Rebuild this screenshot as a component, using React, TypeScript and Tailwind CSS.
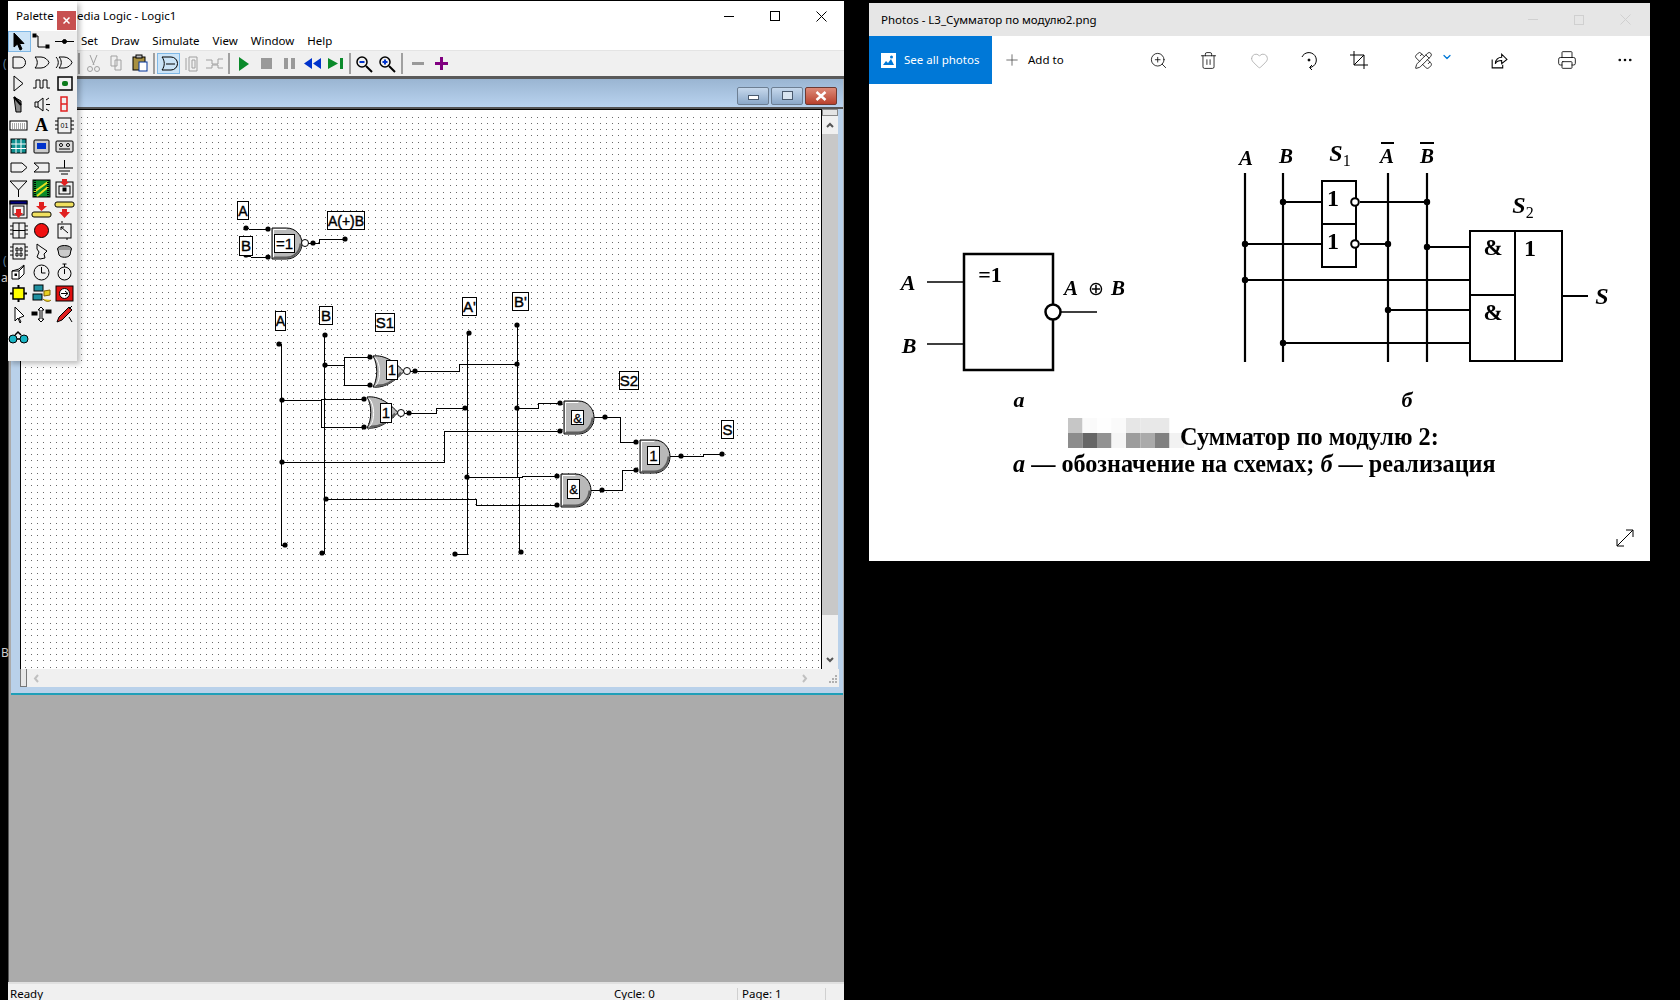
import React from 'react';
import { ZoomIn, Trash2, Heart, PencilRuler, Printer, MoreHorizontal, Plus, ChevronDown } from 'lucide-react';

const ICON = { width: 23, height: 21, viewBox: '0 0 23 21', fill: 'none', stroke: '#000', strokeWidth: 1 };

const Ic: React.FC<{ children: React.ReactNode; className?: string }> = ({ children, className }) => (
  <svg {...ICON} className={className ?? 'block shrink-0'}>{children}</svg>
);

// palette tools, 3 per row, same order as the window
const PALETTE: React.ReactNode[] = [
  <path d="M7 2v14l3.5-3 2.5 6 2-1-2.5-5.5H17z" fill="#000" />,
  <><path d="M5 5h3v11h9" /><rect x="3" y="3" width="3" height="3" fill="#000" /><rect x="16" y="14" width="3" height="3" fill="#000" /></>,
  <><path d="M2 10.5h19" /><circle cx="11.5" cy="10.5" r="2" fill="#000" /></>,

  <path d="M6 5h7a5.5 5.5 0 0 1 0 11H6z" />,
  <path d="M5 5h6c4 0 7 3 8 5.500-1 2.500-4 5.500-8 5.500H5c3-3 3-8 0-11z" />,
  <><path d="M3 5c3 3 3 8 0 11M6 5h5c4 0 7 3 8 5.500-1 2.500-4 5.500-8 5.500H6c3-3 3-8 0-11z" /></>,

  <path d="M7 3l9 7.500-9 7.500z" />,
  <path d="M3 15h3V7h4v8h3V7h4v8h3" />,
  <><rect x="5" y="4" width="14" height="13" strokeWidth="1.500" /><rect x="9" y="8" width="6" height="5" rx="2" fill="#0a7a1a" stroke="none" /></>,

  <><path d="M7 3l7 4v11H9z" fill="#888" /><path d="M7 3l7 8" strokeWidth="2" /></>,
  <path d="M5 8h3v5H5zM8 8l5-4v13l-5-4M16 6l3-2M16 10.500h4M16 15l3 2" />,
  <path d="M8 3h6v7H8zM8 10h6v7H8z" stroke="#e02020" strokeWidth="1.500" />,

  <><rect x="3" y="6" width="17" height="9" fill="#fff" /><path d="M5 9h13M5 11h13M5 13h13" stroke="#555" strokeDasharray="1 1" /></>,
  <text x="11.500" y="16" textAnchor="middle" fill="#000" stroke="none" fontSize="18" fontWeight="700" className="font-['Liberation_Serif',serif]">A</text>,
  <><rect x="5" y="3" width="13" height="15" /><path d="M2 6h3M2 10h3M2 14h3M18 6h3M18 10h3M18 14h3" /><text x="11.500" y="13" textAnchor="middle" fontSize="7" fill="#000" stroke="none" className="font-['Liberation_Sans',sans-serif]">01</text></>,

  <><rect x="4" y="3" width="15" height="14" fill="#0f8f8f" /><path d="M4 8h15M4 12.500h15M9 3v14M14 3v14" stroke="#fff" /></>,
  <><rect x="4" y="4" width="15" height="13" rx="1" fill="#ccc" /><rect x="7" y="7" width="9" height="6" fill="#0033cc" stroke="none" /></>,
  <><rect x="3" y="5" width="17" height="11" rx="1" fill="#ddd" /><circle cx="8" cy="9" r="1.500" fill="#fff" /><circle cx="15" cy="9" r="1.500" fill="#fff" /><path d="M6 13h11" /></>,

  <path d="M4 6h11l5 4.500-5 4.500H4z" />,
  <path d="M4 6h15v9H4l5-4.500z" />,
  <path d="M11.500 3v8M3 11h17M6 14h11M8 17h7" />,

  <><path d="M3 3l8.500 9L20 3zM11.500 12v7" fill="none" /></>,
  <><rect x="3" y="2" width="17" height="17" fill="#0a8a2a" /><path d="M4 14L18 4M7 18l11-9" stroke="#e8e020" strokeWidth="2" /><path d="M5 2v17M18 2v17" stroke="#000" strokeDasharray="1 1" strokeWidth="2" /></>,
  <><rect x="3" y="4" width="17" height="15" /><rect x="6" y="8" width="11" height="8" /><rect x="10" y="10" width="3" height="3" fill="#000" /><path d="M9 1h5v3h2l-4.500 4L7 4h2z" fill="#e02020" stroke="none" /></>,

  <><rect x="3" y="2" width="17" height="17" /><rect x="3" y="2" width="17" height="3" fill="#000080" /><rect x="6" y="7" width="11" height="9" /><path d="M9 10h5v4h2l-4.500 5L7 14h2z" fill="#e02020" stroke="none" /></>,
  <><rect x="2" y="13" width="19" height="5" rx="2" fill="#f0e060" /><path d="M9 3h5v4h3l-5.500 5L6 7h3z" fill="#e02020" stroke="none" /></>,
  <><rect x="2" y="3" width="19" height="5" rx="2" fill="#f0e060" /><path d="M9 10h5v3h3l-5.500 6L6 13h3z" fill="#e02020" stroke="none" /></>,

  <><rect x="6" y="3" width="12" height="15" /><path d="M3 6h3M3 10h3M3 14h3M18 6h3M18 10h3M18 14h3M12 3v15M6 10.500h12" /></>,
  <circle cx="11.500" cy="10.500" r="7" fill="#f01010" />,
  <><rect x="5" y="4" width="13" height="14" /><path d="M9 3v-2M14 18v2M8 7l7 6M8 7h3M8 7v3" /></>,

  <><rect x="6" y="3" width="12" height="15" /><path d="M3 6h3M3 10h3M3 14h3M18 6h3M18 10h3M18 14h3M9 7h2v3H9zM13 7h2v3h-2zM9 12h2v3H9zM13 12h2v3h-2z" /></>,
  <path d="M7 3l4 3 6 4-3 3 1 4-5 1-3-2 2-5-2-3z" />,
  <><ellipse cx="11.500" cy="8" rx="7" ry="3.500" fill="#999" /><path d="M5 9l1 5c2 3 9 3 11 0l1-5" fill="#ccc" /></>,

  <><path d="M5 9l7-2 5-4v9l-5 5H5z" fill="#fff" /><path d="M5 9h7v8M12 9l5-5" /><rect x="8" y="12" width="1.500" height="1.500" fill="#000" /></>,
  <><circle cx="11.500" cy="10.500" r="7.500" /><path d="M11.500 5v6h4" /></>,
  <><circle cx="11.500" cy="11.500" r="6.500" /><path d="M11.500 7v5M9.500 2h4M11.500 2v3" /></>,

  <><rect x="6" y="5" width="11" height="11" fill="#ffff00" strokeWidth="1.500" /><path d="M11.500 2v3M11.500 16v3M3 10.500h3M17 10.500h3" strokeWidth="2" /></>,
  <><rect x="4" y="2" width="9" height="6" fill="#2090a0" /><rect x="3" y="11" width="9" height="6" fill="#2090a0" /><path d="M14 8l6-1v5l-6 1zM13 16c3 3 6 3 8 1" stroke="#806000" fill="#e8d020" /></>,
  <><rect x="3" y="3" width="17" height="15" fill="#e01010" /><circle cx="11.500" cy="10.500" r="5" fill="#fff" /><path d="M8 10.500h7M12 8l3 2.500-3 2.500" /></>,

  <path d="M8 3v14l3-3 2 5 1-1-2-4 5-2z" fill="#fff" />,
  <><path d="M11 3L8 6h2v9H8l3 3 3-3h-2V6h2z" fill="#fff" /><rect x="2" y="8" width="5" height="3" fill="#000" /><rect x="16" y="6" width="5" height="3" fill="#000" /></>,
  <><path d="M4 18l2-5L16 3l3 3L9 16z" fill="#e02020" /><path d="M19 2l-3 3M16 13l3 5" /></>,

  <><circle cx="6" cy="13" r="4" fill="#19b5c5" /><circle cx="17" cy="13" r="4" fill="#19b5c5" /><path d="M10 13h3M8 9l3-3 3 3" strokeWidth="1.500" /></>,
];

const TOOLBAR_LEFT = (
  <>
    <path d="M8 2l4 10M15 2l-4 10" stroke="#a0a0a0" /><circle cx="8" cy="16" r="2.500" stroke="#a0a0a0" /><circle cx="15" cy="16" r="2.500" stroke="#a0a0a0" />
  </>
);

const Sep = () => <div className="w-[6px] h-[21px] flex justify-center"><div className="w-[2px] h-full bg-[#a0a0a0]" /></div>;

const Tb: React.FC<{ children: React.ReactNode; on?: boolean }> = ({ children, on }) => (
  <div className={on ? 'w-[23px] h-[21px] bg-[#cce4f7] outline outline-1 -outline-offset-1 outline-[#7fb8e6]' : 'w-[23px] h-[21px]'}>
    <Ic>{children}</Ic>
  </div>
);

// circuit helpers, coordinates are the screen pixels
const Dot: React.FC<{ p: [number, number] }> = ({ p }) => <circle cx={p[0]} cy={p[1]} r={2.600} fill="#000" />;

const Wire: React.FC<{ d: string }> = ({ d }) => <path d={d} fill="none" stroke="#000" strokeWidth={1} shapeRendering="crispEdges" />;

const Label: React.FC<{ x: number; y: number; w: number; h: number; t: string; size?: number }> = ({ x, y, w, h, t, size = 15 }) => (
  <g>
    <rect x={x + 0.500} y={y + 0.500} width={w} height={h} fill="#fff" stroke="#000" />
    <text x={x + w / 2 + 0.500} y={y + h / 2 + 5.500} textAnchor="middle" fontSize={size} fill="#000" stroke="#000" strokeWidth={0.400} className="font-['Liberation_Sans',sans-serif]">{t}</text>
  </g>
);

const InBox: React.FC<{ x: number; y: number; w: number; h: number; t: string; size?: number }> = ({ x, y, w, h, t, size = 15 }) => (
  <g>
    <rect x={x + 0.500} y={y + 0.500} width={w} height={h} fill="#fff" stroke="#000" />
    <text x={x + w / 2 + 0.500} y={y + h / 2 + 5.500} textAnchor="middle" fontSize={size} fill="#000" stroke="#000" strokeWidth={0.300} className="font-['Liberation_Sans',sans-serif]">{t}</text>
  </g>
);

const AndGate: React.FC<{ x: number; y: number; w?: number; h?: number }> = ({ x, y, w = 30, h = 32 }) => {
  const m = x + w * 0.48;
  return (
    <g>
      <path d={`M${x} ${y}H${m}C${x + w * 0.8} ${y} ${x + w} ${y + h * 0.25} ${x + w} ${y + h / 2}C${x + w} ${y + h * 0.75} ${x + w * 0.8} ${y + h} ${m} ${y + h}H${x}Z`} fill="#b9b9b9" stroke="#000" />
      <path d={`M${x + 1.500} ${y + h - 1.500}H${m}C${x + w * 0.75} ${y + h - 1.500} ${x + w - 2} ${y + h * 0.75} ${x + w - 1.500} ${y + h / 2}`} fill="none" stroke="#5e5e5e" strokeWidth={2} />
      <path d={`M${x + 1.500} ${y + h - 2}V${y + 1.500}H${m}`} fill="none" stroke="#fff" />
    </g>
  );
};

const OrGate: React.FC<{ x: number; y: number; w?: number; h?: number }> = ({ x, y, w = 31, h = 31 }) => (
  <g>
    <path d={`M${x} ${y}C${x + 8} ${y - 1} ${x + w * 0.6} ${y + 2} ${x + w} ${y + h / 2}C${x + w * 0.6} ${y + h - 2} ${x + 8} ${y + h + 1} ${x} ${y + h}C${x + 5} ${y + h * 0.75} ${x + 5} ${y + h * 0.25} ${x} ${y}Z`} fill="#b9b9b9" stroke="#000" />
    <path d={`M${x + 3} ${y + h - 1.500}C${x + 12} ${y + h - 1} ${x + w * 0.6} ${y + h - 4} ${x + w - 3} ${y + h / 2 + 1}`} fill="none" stroke="#5e5e5e" strokeWidth={2} />
    <path d={`M${x + 2} ${y + 1.500}C${x + 8} ${y + 7} ${x + 8} ${y + h - 7} ${x + 3} ${y + h - 2}`} fill="none" stroke="#fff" />
  </g>
);

const Bubble: React.FC<{ x: number; y: number }> = ({ x, y }) => <circle cx={x} cy={y} r={3.500} fill="#fff" stroke="#000" />;

const DOTS: [number, number][] = [
  [246, 228], [246, 255], [268, 229], [268, 257], [313, 243], [345, 239],
  [279, 344], [285, 545], [325, 335], [322, 553], [469, 333], [455, 554], [517, 325], [521, 552],
  [325, 365], [370, 357], [370, 385], [415, 371], [517, 364],
  [282, 400], [364, 399], [364, 427], [409, 413], [465, 408],
  [517, 408], [560, 403], [605, 417], [636, 442],
  [282, 462], [560, 431], [467, 477], [557, 476], [602, 490], [636, 470],
  [326, 499], [557, 505], [681, 456], [722, 454],
];

const WIRES = [
  'M246 228L251 229.500H268M246 255L251 257H268',
  'M308 243H319V239H345',
  'M279 344H281.500V545H285',
  'M324 335V553H322',
  'M469 333H467V554H455',
  'M517 325V477H519V552H521',
  'M325 365H344M344 357V385M344 357H370M344 385H370',
  'M410 371H459V364H517',
  'M282 400H321M321 399V427M321 399H364M321 427H364',
  'M404 413H436V408H465',
  'M517 408H538V403H560',
  'M594 417H620V442H636',
  'M282 462H444V431H560',
  'M467 477H522V476H557',
  'M591 490H622V470H636',
  'M326 499H476V505H557',
  'M670 456H703V454H722',
];

const gridDots = (() => {
  let d = '';
  for (let y = 116.500; y < 669; y += 6.250) {
    for (let x = 24.500; x < 821; x += 6.250) {
      d += `M${Math.round(x)} ${Math.round(y)}h1v1h-1z`;
    }
  }
  return d;
})();

const Circuit = () => (
  <svg viewBox="21 110 800 559" className="block w-[800px] h-[559px] bg-white">
    <path d={gridDots} fill="#6a6a6a" />
    {WIRES.map((d) => <Wire key={d} d={d} />)}

    <AndGate x={272} y={228} w={30} h={31} />
    <InBox x={274} y={234} w={20} h={18} t="=1" />
    <Bubble x={305} y={243} />

    <OrGate x={373} y={356} />
    <InBox x={386} y={360} w={11} h={19} t="1" />
    <Bubble x={407} y={371} />

    <OrGate x={367} y={397} />
    <InBox x={380} y={403} w={11} h={19} t="1" />
    <Bubble x={401} y={413} />

    <AndGate x={564} y={401} w={30} h={33} />
    <InBox x={571} y={410} w={12} h={14} t="&" size={13} />
    <AndGate x={561} y={474} w={30} h={33} />
    <InBox x={567} y={479} w={12} h={19} t="&" size={13} />
    <AndGate x={640} y={440} w={30} h={33} />
    <InBox x={647} y={446} w={12} h={18} t="1" />

    {DOTS.map((p) => <Dot key={p.join()} p={p} />)}

    <Label x={237} y={201} w={11} h={18} t="A" size={14} />
    <Label x={239} y={236} w={13} h={19} t="B" />
    <Label x={327} y={211} w={37} h={18} t="A(+)B" size={14} />
    <Label x={275} y={311} w={10} h={19} t="A" size={14} />
    <Label x={319} y={306} w={13} h={18} t="B" />
    <Label x={375} y={313} w={19} h={18} t="S1" />
    <Label x={462} y={297} w={14} h={18} t="A'" />
    <Label x={512} y={292} w={16} h={18} t="B'" />
    <Label x={619} y={371} w={19} h={18} t="S2" />
    <Label x={721} y={420} w={12} h={18} t="S" />
  </svg>
);

const SERIF = "font-['Liberation_Serif',serif]";

const Scan = () => {
  const top = ['#c6c6c6', '#fafafa', '#fefefe', '#fafafa', '#e6e6e6', '#e8e8e8', '#e8e8e8', '#ffffff'];
  const bottom = ['#8c8c8c', '#666666', '#929292', '#f5f5f5', '#9c9c9c', '#aaaaaa', '#808080', '#f2f2f2'];
  const Bi: React.FC<{ x: number; y: number; t: string; size?: number }> = ({ x, y, t, size = 21 }) => (
    <text x={x} y={y} textAnchor="middle" fontSize={size} fontWeight={700} fontStyle="italic" fill="#000">{t}</text>
  );
  const It: React.FC<{ x: number; y: number; t: string; sub: string }> = ({ x, y, t, sub }) => (
    <text x={x} y={y} textAnchor="middle" fontSize={24} fontWeight={700} fontStyle="italic" fill="#000">{t}<tspan fontSize={16} dy={5} fontStyle="normal" fontWeight={400}>{sub}</tspan></text>
  );
  return (
    <svg viewBox="869 84 781 477" className={`block w-[781px] h-[477px] blur-[0.4px] ${SERIF}`}>
      {/* pixelated patches over the figure number */}
      {top.map((c, i) => <rect key={`t${i}`} x={1068 + i * 14.500} y={418} width={14.500} height={15} fill={c} />)}
      {bottom.map((c, i) => <rect key={`b${i}`} x={1068 + i * 14.500} y={433} width={14.500} height={15} fill={c} />)}

      <g fill="none" stroke="#000" strokeWidth={2}>
        {/* a */}
        <rect x={964} y={254} width={89} height={116} strokeWidth={2.500} />
        <path d="M927 282H963M927 344H963M1061 312H1097" strokeWidth={1.600} />
        <circle cx={1053} cy={312} r={7.500} fill="#fff" strokeWidth={2.500} />

        {/* b */}
        <path d="M1245 173V362M1283 173V362M1388 173V362M1427 173V362" strokeWidth={2.200} />
        <rect x={1322} y={181} width={34} height={86} fill="#fff" />
        <path d="M1322 224H1356" />
        <path d="M1283 202H1322M1360 202H1427M1245 244H1322M1360 244H1388" />
        <path d="M1245 280H1470M1388 310H1470M1283 343H1470M1427 247H1470M1562 296H1588" />
        <rect x={1470} y={231} width={92} height={130} fill="#fff" />
        <path d="M1515 231V361M1470 295H1515" />
        <circle cx={1355} cy={202} r={3.800} fill="#fff" />
        <circle cx={1355} cy={244} r={3.800} fill="#fff" />
        <path d="M1381 143H1394M1420 143H1434" strokeWidth={1.800} />
      </g>
      <g fill="#000">
        {[[1283, 202], [1427, 202], [1245, 244], [1388, 244], [1245, 280], [1427, 247], [1388, 310], [1283, 343]].map((p) => (
          <circle key={p.join()} cx={p[0]} cy={p[1]} r={3.200} />
        ))}
      </g>

      <Bi x={908} y={290} t="A" size={22} />
      <Bi x={909} y={353} t="B" size={22} />
      <text x={990} y={282} textAnchor="middle" fontSize={22} fontWeight={700} fill="#000">=1</text>
      <Bi x={1071} y={295} t="A" />
      <text x={1096} y={295} textAnchor="middle" fontSize={19} fill="#000">⊕</text>
      <Bi x={1118} y={295} t="B" />
      <Bi x={1019} y={407} t="а" size={22} />

      <Bi x={1246} y={165} t="A" />
      <Bi x={1286} y={163} t="B" />
      <It x={1340} y={161} t="S" sub="1" />
      <Bi x={1387} y={163} t="A" />
      <Bi x={1427} y={163} t="B" />
      <It x={1523} y={213} t="S" sub="2" />
      <text x={1333} y={206} textAnchor="middle" fontSize={24} fontWeight={700} fill="#000">1</text>
      <text x={1333} y={249} textAnchor="middle" fontSize={24} fontWeight={700} fill="#000">1</text>
      <text x={1493} y={255} textAnchor="middle" fontSize={23} fontWeight={700} fill="#000">&amp;</text>
      <text x={1493} y={320} textAnchor="middle" fontSize={23} fontWeight={700} fill="#000">&amp;</text>
      <text x={1530} y={256} textAnchor="middle" fontSize={24} fontWeight={700} fill="#000">1</text>
      <text x={1602} y={304} textAnchor="middle" fontSize={24} fontStyle="italic" fontWeight={700} fill="#000">S</text>
      <Bi x={1407} y={407} t="б" size={22} />

      <text x={1180} y={445} fontSize={24.300} fontWeight={700} fill="#000">Сумматор по модулю 2:</text>
      <text x={1013} y={472} fontSize={24.200} fontWeight={700} fill="#000"><tspan fontStyle="italic">а</tspan> — обозначение на схемах; <tspan fontStyle="italic">б</tspan> — реализация</text>
    </svg>
  );
};

const LogicWindow = () => (
  <div className="w-[836px] mt-px h-[999px] flex flex-col bg-white font-['Noto_Sans',sans-serif] text-[11.5px] text-black">
    <div className="h-[30px] flex items-center pl-[69px] relative">
      <span className="leading-none">edia Logic - Logic1</span>
      <div className="ml-auto flex items-center h-full text-black">
        <div className="w-[46px] flex justify-center"><div className="w-[10px] h-px bg-black" /></div>
        <div className="w-[46px] flex justify-center"><div className="w-[10px] h-[10px] border border-black" /></div>
        <div className="w-[46px] flex justify-center">
          <svg width="11" height="11" viewBox="0 0 11 11" stroke="#000" fill="none"><path d="M.5.5l10 10M10.500.5l-10 10" /></svg>
        </div>
      </div>
    </div>
    <div className="h-[19px] flex items-center pl-[73px] gap-[13px] leading-none">
      <span>Set</span><span>Draw</span><span>Simulate</span><span>View</span><span>Window</span><span>Help</span>
    </div>
    <div className="h-[29px] shrink-0 bg-[#f0f0f0] border-t border-[#e4e4e4] border-b-[3px] border-b-[#5a5a5a] flex items-center pl-[68px]">
      <Sep />
      <Tb>{TOOLBAR_LEFT}</Tb>
      <Tb><path d="M6 3h6v10H6zM10 7h6v10h-6z" stroke="#a0a0a0" fill="#f0f0f0" /></Tb>
      <Tb><rect x="5" y="4" width="12" height="13" fill="#a89040" /><rect x="8" y="2" width="6" height="3" fill="#bbb" /><rect x="11" y="9" width="8" height="9" fill="#fff" stroke="#003399" /></Tb>
      <Sep />
      <Tb on><path d="M5 4h9a6 6 0 0 1 0 13H5c3-4 3-9 0-13zM9 11h9" /></Tb>
      <Tb><path d="M6 5v12M9 4h8v14H9zM12 7h3v8h-3z" stroke="#a0a0a0" /></Tb>
      <Tb><path d="M3 7h6v4h6V6h5M3 15h6v-3h6v3h5" stroke="#a0a0a0" /></Tb>
      <Sep />
      <Tb><path d="M7 4l10 7-10 7z" fill="#0a8a2a" stroke="none" /></Tb>
      <Tb><rect x="6" y="5" width="11" height="11" fill="#999" stroke="none" /></Tb>
      <Tb><path d="M6 5h4v11H6zM13 5h4v11h-4z" fill="#999" stroke="none" /></Tb>
      <Tb><path d="M11 5v11L3 10.500zM20 5v11l-8-5.500z" fill="#0033cc" stroke="none" /></Tb>
      <Tb><path d="M4 5l10 5.500L4 16zM16 5h3v11h-3z" fill="#0a8a2a" stroke="none" /></Tb>
      <Sep />
      <Tb><circle cx="9" cy="9" r="5" strokeWidth="1.500" /><path d="M6.500 9h5" stroke="#0033cc" strokeWidth="2" /><path d="M13 13l6 6" strokeWidth="2" /></Tb>
      <Tb><circle cx="9" cy="9" r="5" strokeWidth="1.500" /><path d="M6.500 9h5M9 6.500v5" stroke="#0033cc" strokeWidth="2" /><path d="M13 13l6 6" strokeWidth="2" /></Tb>
      <Sep />
      <div className="w-[2px]" />
      <Tb><rect x="5" y="9" width="12" height="3" fill="#999" stroke="none" /></Tb>
      <Tb><path d="M10 4h3v5h5v3h-5v5h-3v-5H5V9h5z" fill="#800080" stroke="none" /></Tb>
    </div>

    {/* workspace with the child window */}
    <div className="flex-1 min-h-0 bg-[#ababab] border-l border-[#555] pl-[2px] flex flex-col">
      <div className="w-[832px] h-[616px] bg-[#b9d1ea] border-b-2 border-b-[#1f9fb8] flex flex-col">
        <div className="h-[30px] shrink-0 bg-linear-to-b from-[#9ab5d2] to-[#b9d3ef] border-b-2 border-b-[#555] flex items-center justify-end gap-[2px] pr-[6px] pt-[5px]">
          <div className="w-[32px] h-[18px] rounded-[2px] border border-[#6d7f93] bg-linear-to-b from-[#c6d8ec] to-[#8ba8c8] flex items-center justify-center"><div className="w-[11px] h-[5px] bg-white border border-[#4a5a6e] mt-[3px]" /></div>
          <div className="w-[32px] h-[18px] rounded-[2px] border border-[#6d7f93] bg-linear-to-b from-[#c6d8ec] to-[#8ba8c8] flex items-center justify-center"><div className="w-[11px] h-[9px] bg-[#d8e4f0] border border-[#4a5a6e]" /></div>
          <div className="w-[32px] h-[18px] rounded-[2px] border border-[#6d3a32] bg-linear-to-b from-[#dd8a78] to-[#b8402c] flex items-center justify-center">
            <svg width="12" height="10" viewBox="0 0 12 10" stroke="#fff" strokeWidth="2.500" fill="none"><path d="M1.500 1l9 8M10.500 1l-9 8" /></svg>
          </div>
        </div>
        <div className="pl-[9px] pr-[4px] flex flex-col">
          <div className="flex h-[560px]">
            <div className="w-[802px] h-[560px] border-x border-t border-black bg-white overflow-hidden">
              <Circuit />
            </div>
            <div className="w-[16px] bg-[#f0f0f0] flex flex-col">
              <div className="h-[7px] bg-[#e4e4e4] border border-[#888]" />
              <div className="h-[18px] flex items-center justify-center">
                <svg width="8" height="6" viewBox="0 0 8 6" fill="none" stroke="#555" strokeWidth="2"><path d="M1 5l3-3 3 3" /></svg>
              </div>
              <div className="h-[481px] bg-[#c8c8c8]" />
              <div className="flex-1 flex items-end justify-center pb-[6px]">
                <svg width="8" height="6" viewBox="0 0 8 6" fill="none" stroke="#555" strokeWidth="2"><path d="M1 1l3 3 3-3" /></svg>
              </div>
            </div>
          </div>
          <div className="h-[18px] bg-[#f0f0f0] flex items-center">
            <div className="w-[7px] h-[18px] bg-[#e8e8e8] border-l border-b border-r border-[#777]" />
            <svg className="ml-[6px]" width="6" height="9" viewBox="0 0 6 9" fill="none" stroke="#c0c0c0" strokeWidth="2"><path d="M5 1L2 4.500 5 8" /></svg>
            <svg className="ml-auto mr-[20px]" width="6" height="9" viewBox="0 0 6 9" fill="none" stroke="#c0c0c0" strokeWidth="2"><path d="M1 1l3 3.500L1 8" /></svg>
            <svg className="mr-[2px]" width="9" height="9" viewBox="0 0 9 9" fill="#b0b0b0"><path d="M7 1h2v2H7zM4 4h2v2H4zM7 4h2v2H7zM1 7h2v2H1zM4 7h2v2H4zM7 7h2v2H7z" /></svg>
          </div>
        </div>
      </div>
      <div className="flex-1" />
    </div>

    <div className="h-[18px] shrink-0 bg-[#f0f0f0] border-t-2 border-t-[#e0e0e0] flex leading-none pt-[4px]">
      <span className="pl-[2px] w-[606px]">Ready</span>
      <span className="w-[123px]">Cycle: 0</span>
      <div className="border-l border-[#d0d0d0] pl-[4px] w-[88px]">Page: 1</div>
      <div className="border-l border-[#d0d0d0]" />
    </div>
  </div>
);

const Palette = () => (
  <div className="absolute left-[8px] top-px w-[69px] h-[360px] bg-[#f0f0f0] shadow-[3px_3px_5px_rgba(0,0,0,0.25)] font-['Noto_Sans',sans-serif] text-[11.5px] text-black">
    <div className="h-[30px] bg-white flex items-center pl-[8px]">
      <span className="leading-none">Palette</span>
      <div className="ml-auto mr-px mt-[8px] shrink-0 w-[19px] h-[19px] bg-[#c75050] flex items-center justify-center">
        <svg width="7" height="7" viewBox="0 0 7 7" stroke="#fff" strokeWidth="1.500" fill="none"><path d="M.5.5l6 6M6.500.5l-6 6" /></svg>
      </div>
    </div>
    <div className="grid grid-cols-3">
      {PALETTE.map((n, i) => (
        <div key={i} className={i === 0 ? 'h-[21px] bg-[#cce4f7] outline outline-1 -outline-offset-1 outline-[#7fb8e6]' : i === 42 ? 'h-[21px] mt-px' : 'h-[21px]'}>
          <Ic className="block shrink-0 -ml-px">{n}</Ic>
        </div>
      ))}
    </div>
  </div>
);

const PhotosWindow = () => (
  <div className="ml-[25px] mt-[3px] w-[781px] h-[558px] bg-white flex flex-col font-['Noto_Sans',sans-serif] text-black">
    <div className="h-[33px] shrink-0 bg-[#e6e6e6] flex items-center pl-[12px] pr-[2px] text-[11.5px]">
      <span>Photos - L3_Сумматор по модулю2.png</span>
      <div className="ml-auto flex items-center text-[#c9c9c9]">
        <div className="w-[46px] flex justify-center"><div className="w-[10px] h-px bg-[#d0d0d0]" /></div>
        <div className="w-[46px] flex justify-center"><div className="w-[10px] h-[10px] border border-[#d0d0d0]" /></div>
        <div className="w-[46px] flex justify-center">
          <svg width="11" height="11" viewBox="0 0 11 11" stroke="#d0d0d0" fill="none"><path d="M.5.5l10 10M10.500.5l-10 10" /></svg>
        </div>
      </div>
    </div>
    <div className="h-[48px] shrink-0 flex items-center text-[11.5px]">
      <div className="w-[123px] h-full bg-[#0078d7] text-white flex items-center pl-[12px] gap-[8px]">
        <svg width="15" height="15" viewBox="0 0 15 15" fill="#fff"><path d="M0 0h15v15H0z" /><path d="M2 12l3-4 2 2 3-4 3 6z" fill="#0078d7" /><circle cx="10.500" cy="4" r="1.500" fill="#0078d7" /></svg>
        <span>See all photos</span>
      </div>
      <div className="flex items-center ml-[11px] w-[130px] gap-[7px]">
        <Plus size={18} strokeWidth={1} color="#444" />
        <span>Add to</span>
      </div>
      <div className="w-[50px] flex justify-center"><ZoomIn size={19} strokeWidth={1} /></div>
      <div className="w-[50px] flex justify-center"><Trash2 size={19} strokeWidth={1} /></div>
      <div className="w-[50px] ml-px flex justify-center"><Heart size={19} strokeWidth={1} color="#a8a8a8" /></div>
      <div className="w-[50px] flex justify-center">
        <svg width="20" height="20" viewBox="0 0 20 20" fill="none" stroke="#000"><path d="M3 7a7.500 7.500 0 1 1 8 10.500M13 15l-2.500 2.500L13 20" /><circle cx="10" cy="10" r="1" fill="#000" /></svg>
      </div>
      <div className="w-[50px] flex justify-center">
        <svg width="20" height="20" viewBox="0 0 20 20" fill="none" stroke="#000"><path d="M5 1v14h14M1 5h14v14M5 15L15 5" /></svg>
      </div>
      <div className="w-[50px] ml-[14px] flex justify-center relative">
        <PencilRuler size={19} strokeWidth={1} />
        <ChevronDown className="absolute right-[-5px] top-0" size={12} strokeWidth={2.500} color="#0078d7" />
      </div>
      <div className="w-[50px] ml-[25px] flex justify-center">
        <svg width="19" height="19" viewBox="0 0 18 18" fill="none" stroke="#000"><path d="M3 8v8h10v-3M6 12c0-4 3-6 6-6V3l5 5-5 4V9c-3 0-5 1-6 3z" /></svg>
      </div>
      <div className="w-[50px] ml-[19px] flex justify-center"><Printer size={20} strokeWidth={1} /></div>
      <div className="w-[50px] ml-[8px] flex justify-center"><MoreHorizontal size={18} strokeWidth={1.500} /></div>
    </div>
    <div className="flex-1 min-h-0 relative">
      <Scan />
      <svg className="absolute right-[15px] bottom-[13px]" width="20" height="20" viewBox="0 0 20 20" fill="none" stroke="#000"><path d="M2 18L18 2M11 2h7v7M2 11v7h7" /></svg>
    </div>
  </div>
);

export default function App() {
  return (
    <div className="relative w-[1680px] h-[1000px] bg-black overflow-hidden flex pl-[8px]">
      <span className="absolute left-[3px] top-[58px] text-[12px] leading-none text-[#5a7a9a] font-['Noto_Sans',sans-serif]">(</span>
      <span className="absolute left-[3px] top-[255px] text-[12px] leading-none text-[#5a7a9a] font-['Noto_Sans',sans-serif]">(</span>
      <span className="absolute left-px top-[272px] text-[12px] leading-none text-[#ccc] font-['Noto_Sans',sans-serif]">a</span>
      <span className="absolute left-px top-[647px] text-[12px] leading-none text-[#ccc] font-['Noto_Sans',sans-serif]">B</span>
      <LogicWindow />
      <PhotosWindow />
      <Palette />
    </div>
  );
}
